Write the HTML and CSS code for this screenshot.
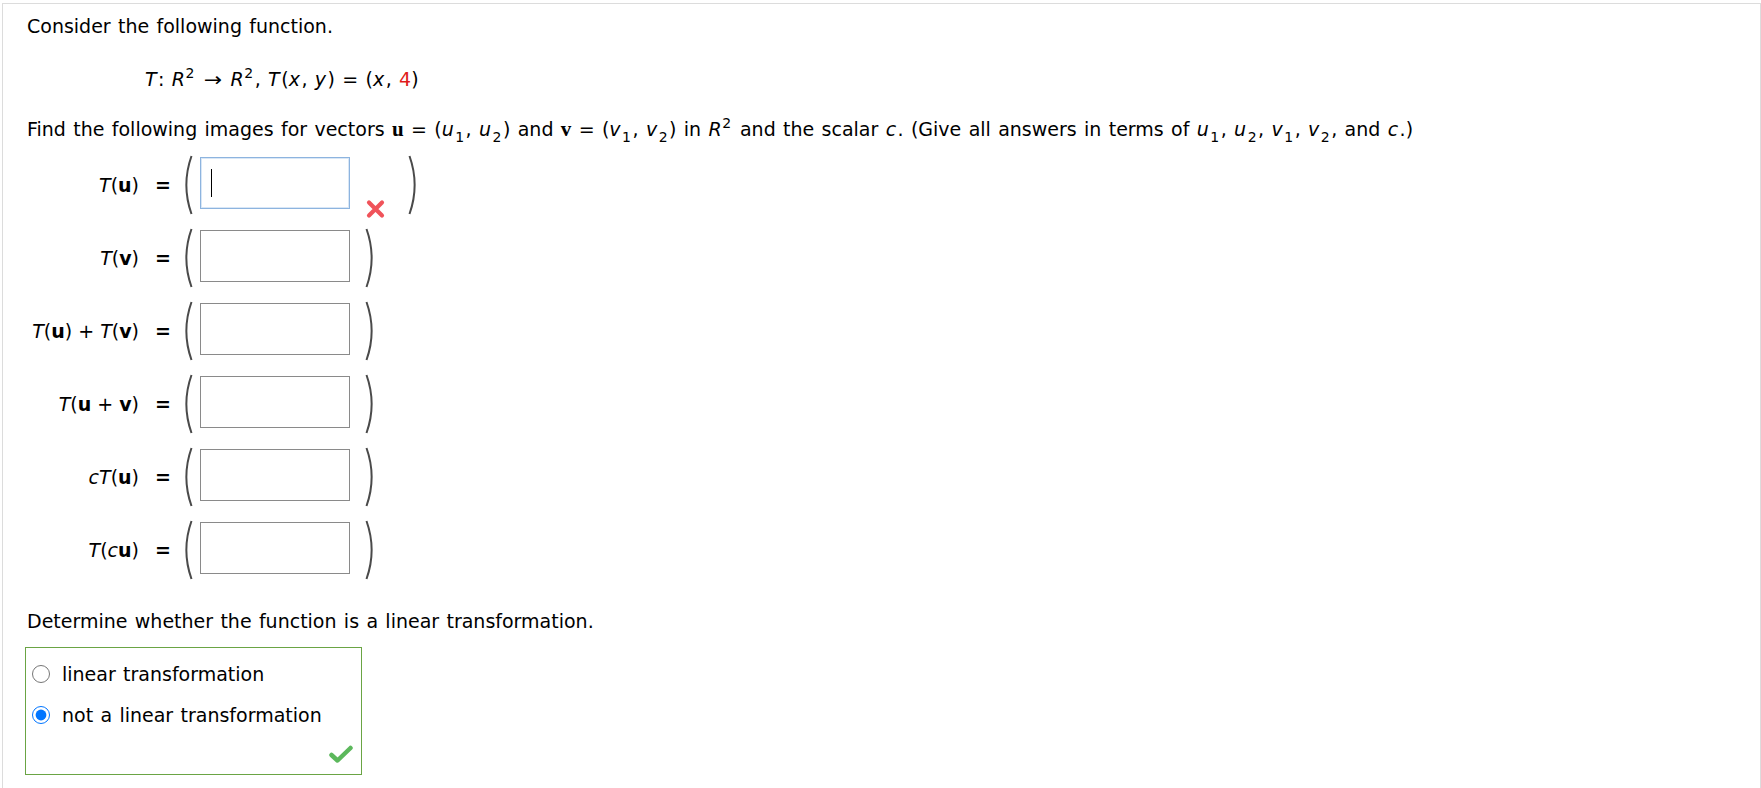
FILE: index.html
```html
<!DOCTYPE html>
<html>
<head>
<meta charset="utf-8">
<link rel="stylesheet" href="styles.css">
</head>
<body>
<div class="page">
  <p class="intro">Consider the following function.</p>
  <p class="formula m"><i>T</i>: <i>R</i><sup>2</sup> <span class="arrow">→</span> <i>R</i><sup>2</sup>, <i>T</i>(<i>x</i>, <i>y</i>) = (<i>x</i>, <span class="red">4</span>)</p>
  <p class="find m">Find the following images for vectors <b class="bs">u</b> = (<i>u</i><sub>1</sub>, <i>u</i><sub>2</sub>) and <b class="bs">v</b> = (<i>v</i><sub>1</sub>, <i>v</i><sub>2</sub>) in <i>R</i><sup>2</sup> and the scalar <i>c</i>. (Give all answers in terms of <i>u</i><sub>1</sub>, <i>u</i><sub>2</sub>, <i>v</i><sub>1</sub>, <i>v</i><sub>2</sub>, and <i>c</i>.)</p>

  <div class="rows">
    <div class="row">
      <div class="label"><i>T</i>(<b>u</b>)</div>
      <div class="eq">=</div>
      <svg class="paren lp" width="13" height="60" viewBox="0 0 13 60"><path d="M11.5 1 Q1.2 30 11.5 59" /></svg>
      <div class="box active"><span class="caret"></span></div>
      <svg class="xmark" width="21" height="20" viewBox="0 0 21 20"><path d="M4 3.5 L17 16.5 M17 3.5 L4 16.5" /></svg>
      <svg class="paren rp wide" width="13" height="60" viewBox="0 0 13 60"><path d="M1.5 1 Q11.8 30 1.5 59" /></svg>
    </div>
    <div class="row">
      <div class="label"><i>T</i>(<b>v</b>)</div>
      <div class="eq">=</div>
      <svg class="paren lp" width="13" height="60" viewBox="0 0 13 60"><path d="M11.5 1 Q1.2 30 11.5 59" /></svg>
      <div class="box"></div>
      <svg class="paren rp" width="13" height="60" viewBox="0 0 13 60"><path d="M1.5 1 Q11.8 30 1.5 59" /></svg>
    </div>
    <div class="row">
      <div class="label"><i>T</i>(<b>u</b>) + <i>T</i>(<b>v</b>)</div>
      <div class="eq">=</div>
      <svg class="paren lp" width="13" height="60" viewBox="0 0 13 60"><path d="M11.5 1 Q1.2 30 11.5 59" /></svg>
      <div class="box"></div>
      <svg class="paren rp" width="13" height="60" viewBox="0 0 13 60"><path d="M1.5 1 Q11.8 30 1.5 59" /></svg>
    </div>
    <div class="row">
      <div class="label"><i>T</i>(<b>u</b> + <b>v</b>)</div>
      <div class="eq">=</div>
      <svg class="paren lp" width="13" height="60" viewBox="0 0 13 60"><path d="M11.5 1 Q1.2 30 11.5 59" /></svg>
      <div class="box"></div>
      <svg class="paren rp" width="13" height="60" viewBox="0 0 13 60"><path d="M1.5 1 Q11.8 30 1.5 59" /></svg>
    </div>
    <div class="row">
      <div class="label"><i>cT</i>(<b>u</b>)</div>
      <div class="eq">=</div>
      <svg class="paren lp" width="13" height="60" viewBox="0 0 13 60"><path d="M11.5 1 Q1.2 30 11.5 59" /></svg>
      <div class="box"></div>
      <svg class="paren rp" width="13" height="60" viewBox="0 0 13 60"><path d="M1.5 1 Q11.8 30 1.5 59" /></svg>
    </div>
    <div class="row">
      <div class="label"><i>T</i>(<i>c</i><b>u</b>)</div>
      <div class="eq">=</div>
      <svg class="paren lp" width="13" height="60" viewBox="0 0 13 60"><path d="M11.5 1 Q1.2 30 11.5 59" /></svg>
      <div class="box"></div>
      <svg class="paren rp" width="13" height="60" viewBox="0 0 13 60"><path d="M1.5 1 Q11.8 30 1.5 59" /></svg>
    </div>
  </div>

  <p class="determine">Determine whether the function is a linear transformation.</p>
  <div class="choices">
    <label class="choice"><input type="radio" name="lt"> <span>linear transformation</span></label>
    <label class="choice"><input type="radio" name="lt" checked> <span>not a linear transformation</span></label>
    <div class="checkrow">
      <svg class="check" width="24" height="19" viewBox="0 0 24 19"><path d="M2.5 10 L8.5 15.5 L21.5 3" /></svg>
    </div>
  </div>
</div>
</body>
</html>
```
FILE: styles.css
```css
html, body {
  margin: 0;
  padding: 0;
  background: #ffffff;
}
body {
  font-family: "DejaVu Sans", Verdana, sans-serif;
  font-size: 19px;
  word-spacing: 1.3px;
  color: #000;
}
.page {
  margin: 3px 0 0 2px;
  border: 1px solid #dcdcdc;
  border-bottom: none;
  height: 785px;
  box-sizing: border-box;
  padding: 0 0 0 24px;
}
p {
  margin: 0;
  line-height: 23px;
}
.intro {
  padding-top: 11px;
}
.formula {
  margin-top: 30px;
  padding-left: 118px;
}
.find {
  margin-top: 27px;
}
.m i {
  margin-right: 1.5px;
}
.m i + sup {
  margin-left: -1px;
}
sup, sub {
  font-size: 14px;
  line-height: 0;
  position: relative;
  vertical-align: baseline;
  margin: 0 1.5px 0 0;
}
sup { top: -0.55em; }
sub { top: 0.4em; }
.arrow {
  display: inline-block;
  font-size: 19px;
  transform: scaleX(1.15);
  margin: 0 2px;
}
.red { color: #e01b1b; }
.bs {
  font-family: "Liberation Serif", "Times New Roman", serif;
  font-size: 21px;
}
.rows {
  margin-top: 16px;
  display: flex;
  flex-direction: column;
  gap: 21px;
}
.row {
  display: flex;
  align-items: center;
  height: 52px;
}
.label {
  width: 112px;
  text-align: right;
  white-space: nowrap;
  position: relative;
  top: 2px;
  word-spacing: 0;
}
.eq {
  width: 12px;
  margin-left: 16px;
  font-weight: bold;
  position: relative;
  top: 2px;
}
.paren {
  flex: none;
  overflow: visible;
}
.paren path {
  fill: none;
  stroke: #4a4a4a;
  stroke-width: 2;
}
.lp {
  margin-left: 13px;
  margin-top: 4px;
}
.rp {
  margin-left: 15px;
  margin-top: 4px;
}
.rp.wide {
  margin-left: 22px;
}
.box {
  flex: none;
  width: 150px;
  height: 52px;
  box-sizing: border-box;
  margin-left: 7px;
  border: 1px solid #8a8a8a;
  background: #fff;
  display: flex;
  align-items: center;
}
.box.active {
  border-color: #8db4df;
  box-shadow: inset 0 0 0 1px #d9e7f6;
}
.caret {
  display: block;
  width: 1px;
  height: 28px;
  margin-left: 10px;
  background: #000;
}
.xmark {
  flex: none;
  margin-left: 15px;
  align-self: flex-end;
  margin-bottom: -10px;
}
.xmark path {
  fill: none;
  stroke: #f0535a;
  stroke-width: 4.2;
  stroke-linecap: round;
}
.determine {
  margin-top: 36px;
}
.choices {
  margin: 14px 0 0 -2px;
  width: 337px;
  height: 128px;
  box-sizing: border-box;
  border: 1px solid #6aa444;
  padding: 15px 0 0 6px;
}
.choice {
  display: flex;
  align-items: center;
  height: 22px;
  margin-bottom: 19px;
}
.choice input {
  width: 18px;
  height: 18px;
  margin: 0 12px 0 0;
  flex: none;
}
.checkrow {
  display: flex;
  justify-content: flex-end;
  margin-top: 0;
  padding-right: 8px;
}
.check path {
  fill: none;
  stroke: #5cb85c;
  stroke-width: 4.5;
  stroke-linecap: round;
  stroke-linejoin: round;
}
```
